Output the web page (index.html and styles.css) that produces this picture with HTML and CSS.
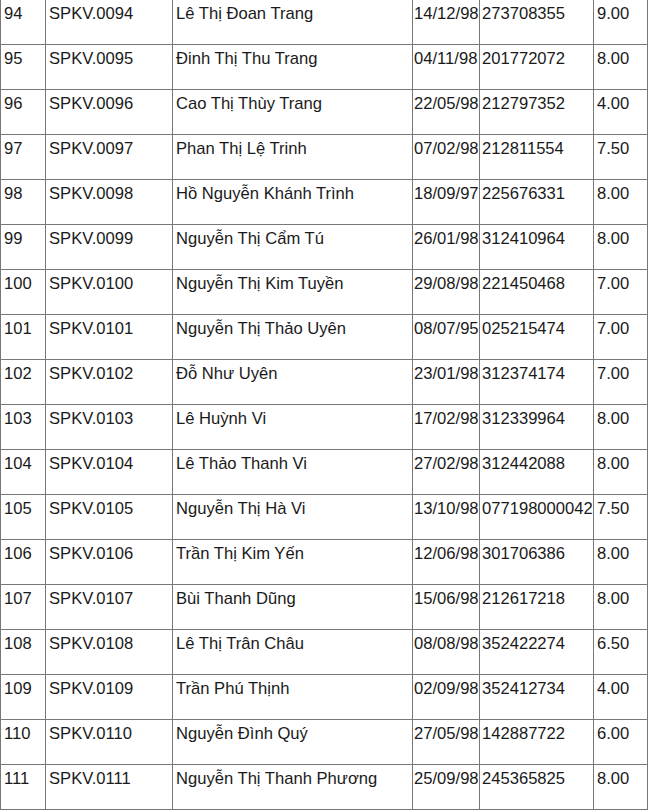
FILE: index.html
```html
<!DOCTYPE html>
<html lang="vi">
<head>
<meta charset="utf-8">
<title>Danh sách</title>
<link rel="stylesheet" href="styles.css">
</head>
<body>
<table class="list">
<colgroup>
<col class="c-no"><col class="c-code"><col class="c-name"><col class="c-dob"><col class="c-id"><col class="c-score">
</colgroup>
<tbody>
<tr><td>94</td><td>SPKV.0094</td><td>Lê Thị Đoan Trang</td><td>14/12/98</td><td>273708355</td><td>9.00</td></tr>
<tr><td>95</td><td>SPKV.0095</td><td>Đinh Thị Thu Trang</td><td>04/11/98</td><td>201772072</td><td>8.00</td></tr>
<tr><td>96</td><td>SPKV.0096</td><td>Cao Thị Thùy Trang</td><td>22/05/98</td><td>212797352</td><td>4.00</td></tr>
<tr><td>97</td><td>SPKV.0097</td><td>Phan Thị Lệ Trinh</td><td>07/02/98</td><td>212811554</td><td>7.50</td></tr>
<tr><td>98</td><td>SPKV.0098</td><td>Hồ Nguyễn Khánh Trình</td><td>18/09/97</td><td>225676331</td><td>8.00</td></tr>
<tr><td>99</td><td>SPKV.0099</td><td>Nguyễn Thị Cẩm Tú</td><td>26/01/98</td><td>312410964</td><td>8.00</td></tr>
<tr><td>100</td><td>SPKV.0100</td><td>Nguyễn Thị Kim Tuyền</td><td>29/08/98</td><td>221450468</td><td>7.00</td></tr>
<tr><td>101</td><td>SPKV.0101</td><td>Nguyễn Thị Thảo Uyên</td><td>08/07/95</td><td>025215474</td><td>7.00</td></tr>
<tr><td>102</td><td>SPKV.0102</td><td>Đỗ Như Uyên</td><td>23/01/98</td><td>312374174</td><td>7.00</td></tr>
<tr><td>103</td><td>SPKV.0103</td><td>Lê Huỳnh Vi</td><td>17/02/98</td><td>312339964</td><td>8.00</td></tr>
<tr><td>104</td><td>SPKV.0104</td><td>Lê Thảo Thanh Vi</td><td>27/02/98</td><td>312442088</td><td>8.00</td></tr>
<tr><td>105</td><td>SPKV.0105</td><td>Nguyễn Thị Hà Vi</td><td>13/10/98</td><td>077198000042</td><td>7.50</td></tr>
<tr><td>106</td><td>SPKV.0106</td><td>Trần Thị Kim Yến</td><td>12/06/98</td><td>301706386</td><td>8.00</td></tr>
<tr><td>107</td><td>SPKV.0107</td><td>Bùi Thanh Dũng</td><td>15/06/98</td><td>212617218</td><td>8.00</td></tr>
<tr><td>108</td><td>SPKV.0108</td><td>Lê Thị Trân Châu</td><td>08/08/98</td><td>352422274</td><td>6.50</td></tr>
<tr><td>109</td><td>SPKV.0109</td><td>Trần Phú Thịnh</td><td>02/09/98</td><td>352412734</td><td>4.00</td></tr>
<tr><td>110</td><td>SPKV.0110</td><td>Nguyễn Đình Quý</td><td>27/05/98</td><td>142887722</td><td>6.00</td></tr>
<tr><td>111</td><td>SPKV.0111</td><td>Nguyễn Thị Thanh Phương</td><td>25/09/98</td><td>245365825</td><td>8.00</td></tr>
</tbody>
</table>
</body>
</html>
```
FILE: styles.css
```css
html, body {
  margin: 0;
  padding: 0;
  background: #ffffff;
}

body {
  font-family: "Liberation Sans", Arial, sans-serif;
  font-size: 16.6px;
  color: #1a1a1a;
}

.list {
  border-collapse: collapse;
  table-layout: fixed;
  width: 647px;
  margin-top: -1px;
}

.list td {
  border: 1px solid #787878;
  height: 45px;
  padding: 4px 0 0 3px;
  vertical-align: top;
  white-space: nowrap;
  overflow: hidden;
  box-sizing: border-box;
  line-height: 20px;
}

.c-no { width: 45px; }
.c-code { width: 127px; }
.c-name { width: 240px; }
.c-dob { width: 67px; }
.c-id { width: 114px; }
.c-score { width: 54px; }

.list td:nth-child(4) { padding-left: 1px; }
.list td:nth-child(5) { padding-left: 2px; }
```
